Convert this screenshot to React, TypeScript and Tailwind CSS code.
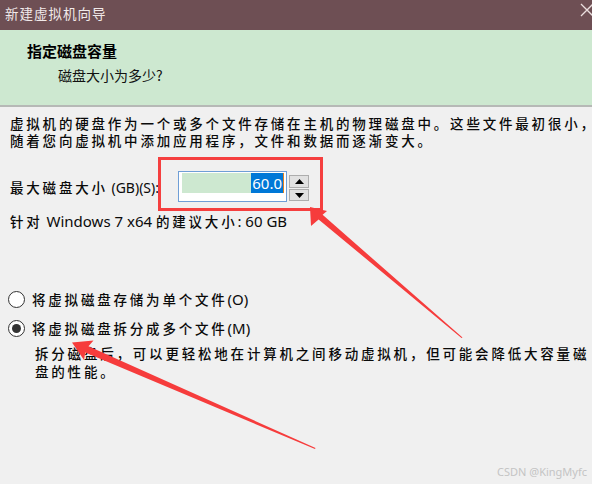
const CJK = /([\u2E80-\u9FFF\u3000-\u303F\uFF00-\uFFEF]+)/;

// CJK runs get the wide tracking of the dialog font, latin runs stay tight
function Mixed({ text, cjk, latin }: { text: string; cjk: string; latin: string }) {
    return (
        <>
            {text
                .split(CJK)
                .filter(Boolean)
                .map((part, i) =>
                    CJK.test(part) ? (
                        <span key={i} className={cjk}>
                            {part}
                        </span>
                    ) : (
                        <span key={i} className={latin}>
                            {part}
                        </span>
                    )
                )}
        </>
    );
}

const BODY_CJK = "font-['Noto_Sans_CJK_SC',sans-serif] font-medium text-[13.5px] tracking-[2.8px]";
const BODY_LAT = "font-['Noto_Sans','Noto_Sans_CJK_SC',sans-serif] text-[15px] tracking-normal";
const LABEL_LAT = "font-['Noto_Sans','Noto_Sans_CJK_SC',sans-serif] text-[14px] tracking-normal";

function Line({ text, className = "", latin = BODY_LAT }: { text: string; className?: string; latin?: string }) {
    return (
        <div className={`h-[17px] leading-[17px] whitespace-nowrap text-[#0a0a0a] ${className}`}>
            <Mixed text={text} cjk={BODY_CJK} latin={latin} />
        </div>
    );
}

function Radio({ checked, label }: { checked?: boolean; label: string }) {
    return (
        <div className="flex items-center h-[17px] -ml-[2px]">
            <div className="w-[17px] h-[17px] rounded-full border border-[#333] bg-white flex items-center justify-center shrink-0">
                {checked && <div className="w-[9px] h-[9px] rounded-full bg-[#333]" />}
            </div>
            <div className="ml-[7px] leading-[17px] whitespace-nowrap text-[#0a0a0a]">
                <Mixed text={label} cjk={BODY_CJK} latin={BODY_LAT} />
            </div>
        </div>
    );
}

function Spinner() {
    return (
        <div className="ml-[2px] mt-[4px] flex flex-col gap-[1px]">
            <div className="w-[20px] h-[13px] bg-[#e1e1e1] border border-[#adadad] flex items-center justify-center">
                <svg width="9" height="5" viewBox="0 0 9 5">
                    <path d="M0 5 L4.5 0 L9 5 Z" fill="#000" />
                </svg>
            </div>
            <div className="w-[20px] h-[12px] bg-[#e1e1e1] border border-[#adadad] flex items-center justify-center">
                <svg width="9" height="5" viewBox="0 0 9 5">
                    <path d="M0 0 L9 0 L4.5 5 Z" fill="#000" />
                </svg>
            </div>
        </div>
    );
}

export default function App() {
    return (
        <div className="relative w-[592px] h-[484px] overflow-hidden bg-[#f0f0f0]">
            {/* title bar */}
            <div className="h-[30px] bg-[#6e4f54] flex items-center justify-between pl-[5px]">
                <span className="font-['Noto_Sans_CJK_SC',sans-serif] text-[13.5px] tracking-[1px] text-[#f1eaea] -mt-[4px]">
                    新建虚拟机向导
                </span>
                <svg width="14" height="14" viewBox="0 0 14 14" className="-mr-[2px] -mt-[10px]">
                    <path d="M1 1 L13 13 M13 1 L1 13" stroke="#eadede" strokeWidth="1.3" />
                </svg>
            </div>

            {/* header */}
            <div className="h-[77px] bg-[#cde8d0] border-b-2 border-[#b6b9b6] pl-[27px] pt-[10px]">
                <div className="font-['Noto_Sans_CJK_SC',sans-serif] font-bold text-[15px] leading-[22px] text-black">
                    指定磁盘容量
                </div>
                <div className="ml-[31px] mt-[2px] font-['Noto_Sans_CJK_SC',sans-serif] text-[14px] leading-[22px] text-[#111]">
                    磁盘大小为多少?
                </div>
            </div>

            {/* body */}
            <div className="px-[10px] pt-[8px]">
                <Line text="虚拟机的硬盘作为一个或多个文件存储在主机的物理磁盘中。这些文件最初很小，" />
                <Line text="随着您向虚拟机中添加应用程序，文件和数据而逐渐变大。" />

                <div className="flex mt-[22px] h-[31px]">
                    <div className="w-[168px] flex items-center pt-[1px]">
                        <Line text="最大磁盘大小 (GB)(S):" latin={LABEL_LAT} />
                    </div>
                    <div className="w-[109px] h-[31px] border border-[#6f9ed6] bg-white pt-[1px] pl-[3px] pr-[2px]">
                        <div className="h-[20px] bg-[#cde8d0] flex justify-end items-stretch">
                            <span className="bg-[#0078d7] text-white font-['Noto_Sans',sans-serif] text-[15px] leading-[20px] px-[1px]">
                                60.0
                            </span>
                            <span className="w-[1px] bg-[#e08020]" />
                        </div>
                    </div>
                    <Spinner />
                </div>

                <Line text="针对 Windows 7 x64 的建议大小: 60 GB" className="mt-[11px]" />

                <div className="mt-[61px]">
                    <Radio label="将虚拟磁盘存储为单个文件(O)" />
                </div>
                <div className="mt-[12px]">
                    <Radio checked label="将虚拟磁盘拆分成多个文件(M)" />
                </div>

                <div className="ml-[25px] mt-[7px]">
                    <div className="h-[18px] leading-[18px] whitespace-nowrap text-[#0a0a0a]">
                        <Mixed text="拆分磁盘后，可以更轻松地在计算机之间移动虚拟机，但可能会降低大容量磁" cjk={BODY_CJK} latin={BODY_LAT} />
                    </div>
                    <div className="h-[18px] leading-[18px] whitespace-nowrap text-[#0a0a0a]">
                        <Mixed text="盘的性能。" cjk={BODY_CJK} latin={BODY_LAT} />
                    </div>
                </div>
            </div>

            {/* annotation: red box */}
            <div className="absolute left-[158px] top-[157px] w-[165px] h-[54px] border-[3px] border-[#f53f3f]" />

            {/* annotation: arrows */}
            <svg className="absolute inset-0 pointer-events-none" width="592" height="484" viewBox="0 0 592 484">
                <path
                    d="M310 207 L327 211 L322.6 214.8 L462.5 337.5 L461.5 338 L318.6 219.4 L311 226 Z"
                    fill="#f63c3c"
                />
                <path
                    d="M72 342.5 L93.5 340.5 L88.5 346.2 L315.5 448 L315 449 L85.3 352.6 L84 360 Z"
                    fill="#f63c3c"
                />
            </svg>

            {/* watermark */}
            <div className="absolute right-[5px] bottom-[5px] font-['Noto_Sans',sans-serif] text-[11px] leading-[14px] text-[#c4c4c4]">
                CSDN @KingMyfc
            </div>
        </div>
    );
}
